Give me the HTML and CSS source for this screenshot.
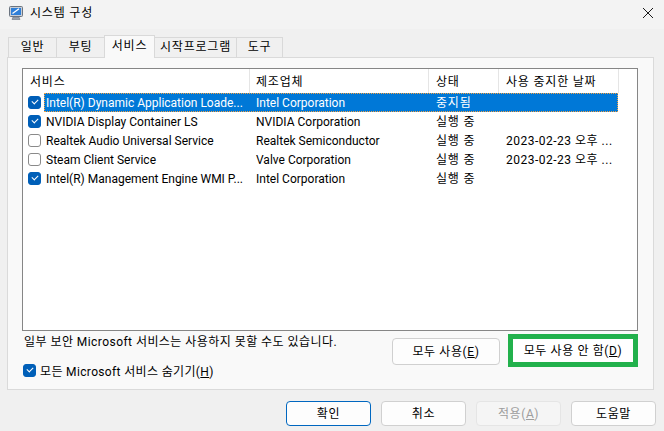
FILE: index.html
```html
<!DOCTYPE html>
<html lang="ko">
<head>
<meta charset="utf-8">
<title>시스템 구성</title>
<link rel="stylesheet" href="styles.css">
</head>
<body>
<div class="window">
  <div class="titlebar">
    <svg class="app-icon" width="16" height="16" viewBox="0 0 16 16">
      <rect x="1.5" y="1.5" width="13" height="10" rx="1" fill="#c9ced6" stroke="#6b7480"/>
      <rect x="3" y="3" width="10" height="7" fill="#2f7fd8"/>
      <path d="M4.5 8.5 L11 3.8" stroke="#ffffff" stroke-width="1.3"/>
      <path d="M5 12 L4 14.5 L12 14.5 L11 12 Z" fill="#9aa2ad" stroke="#6b7480" stroke-width="0.6"/>
    </svg>
    <span class="title">시스템 구성</span>
    <svg class="close" width="12" height="12" viewBox="0 0 12 12">
      <path d="M1 1 L11 11 M11 1 L1 11" stroke="#1a1a1a" stroke-width="1"/>
    </svg>
  </div>

  <div class="tabs">
    <div class="tab">일반</div>
    <div class="tab">부팅</div>
    <div class="tab active">서비스</div>
    <div class="tab">시작프로그램</div>
    <div class="tab">도구</div>
  </div>

  <div class="panel">
    <div class="list">
      <div class="list-head">
        <div class="hcell h1">서비스</div>
        <div class="hcell h2">제조업체</div>
        <div class="hcell h3">상태</div>
        <div class="hcell h4">사용 중지한 날짜</div>
      </div>
      <div class="row">
        <span class="cb on"></span>
        <div class="cells selected">
          <span class="c c1">Intel(R) Dynamic Application Loade...</span>
          <span class="c c2">Intel Corporation</span>
          <span class="c c3">중지됨</span>
          <span class="c c4"></span>
        </div>
      </div>
      <div class="row">
        <span class="cb on"></span>
        <div class="cells">
          <span class="c c1">NVIDIA Display Container LS</span>
          <span class="c c2">NVIDIA Corporation</span>
          <span class="c c3">실행 중</span>
          <span class="c c4"></span>
        </div>
      </div>
      <div class="row">
        <span class="cb"></span>
        <div class="cells">
          <span class="c c1">Realtek Audio Universal Service</span>
          <span class="c c2">Realtek Semiconductor</span>
          <span class="c c3">실행 중</span>
          <span class="c c4">2023-02-23 오후 ...</span>
        </div>
      </div>
      <div class="row">
        <span class="cb"></span>
        <div class="cells">
          <span class="c c1">Steam Client Service</span>
          <span class="c c2">Valve Corporation</span>
          <span class="c c3">실행 중</span>
          <span class="c c4">2023-02-23 오후 ...</span>
        </div>
      </div>
      <div class="row">
        <span class="cb on"></span>
        <div class="cells">
          <span class="c c1">Intel(R) Management Engine WMI P...</span>
          <span class="c c2">Intel Corporation</span>
          <span class="c c3">실행 중</span>
          <span class="c c4"></span>
        </div>
      </div>
    </div>

    <div class="bottom">
      <div class="left">
        <div class="note">일부 보안 Microsoft 서비스는 사용하지 못할 수도 있습니다.</div>
        <div class="hide"><span class="cb on"></span><span class="hide-label">모든 Microsoft 서비스 숨기기(<u>H</u>)</span></div>
      </div>
      <button class="btn enable-all">모두 사용(<u>E</u>)</button>
      <div class="highlight"><button class="btn disable-all">모두 사용 안 함(<u>D</u>)</button></div>
    </div>
  </div>

  <div class="footer">
    <button class="btn fbtn default">확인</button>
    <button class="btn fbtn">취소</button>
    <button class="btn fbtn disabled">적용(<u>A</u>)</button>
    <button class="btn fbtn">도움말</button>
  </div>
</div>
</body>
</html>
```

FILE: styles.css
```css
* { box-sizing: border-box; }
html, body { margin: 0; padding: 0; }
body {
  width: 664px;
  height: 431px;
  overflow: hidden;
  background: #f0f0f0;
  font-family: Roboto, "Noto Sans CJK KR", sans-serif;
  font-size: 12px;
  color: #000;
}
.window { width: 664px; height: 431px; display: flex; flex-direction: column; }

.titlebar {
  height: 29px;
  background: #f3f3f3;
  display: flex;
  align-items: center;
  padding-left: 8px;
  padding-bottom: 3px;
}
.app-icon { flex: none; }
.title { margin-left: 6px; font-size: 12px; line-height: 16px; letter-spacing: 0.8px; }
.close { margin-left: auto; margin-right: 10px; }

.tabs {
  display: flex;
  align-items: flex-end;
  padding-left: 8px;
  margin-top: 6px;
  height: 22px;
  position: relative;
  z-index: 1;
}
.tab {
  height: 20px;
  padding: 0 6px;
  border: 1px solid #d9d9d9;
  border-bottom: none;
  margin-right: -1px;
  background: #f0f0f0;
  line-height: 19px;
  text-align: center;
  letter-spacing: 0.8px;
  white-space: nowrap;
}
.tab:nth-child(1) { width: 49px; }
.tab:nth-child(2) { width: 49px; }
.tab.active {
  width: 51px;
  height: 23px;
  margin-bottom: -1px;
  background: #f9f9f9;
  line-height: 20px;
  padding: 0 2px;
  position: relative;
  z-index: 2;
}
.tab:nth-child(4) { width: 83px; padding: 0 2px; }
.tab:nth-child(5) { width: 47px; }

.panel {
  margin: 0 10px 0 7px;
  height: 333px;
  background: #f9f9f9;
  border: 1px solid #dadada;
  padding: 10px 15px 0 14px;
  display: flex;
  flex-direction: column;
}

.list {
  width: 616px;
  height: 263px;
  background: #fff;
  border: 1px solid #868686;
}
.list-head {
  display: flex;
  height: 24px;
}
.hcell {
  height: 24px;
  line-height: 22px;
  padding-top: 2px;
  padding-left: 7px;
  border-right: 1px solid #e5e5e5;
  letter-spacing: 0.8px;
  white-space: nowrap;
}
.h1 { width: 227px; }
.h2 { width: 179px; padding-left: 6px; }
.h3 { width: 70px; }
.h4 { width: 120px; padding-left: 7px; }

.row {
  display: flex;
  height: 19px;
  align-items: center;
}
.cb {
  width: 13px;
  height: 13px;
  border: 1px solid #8a8a8a;
  border-radius: 3px;
  background: #fff;
  flex: none;
  display: inline-block;
  position: relative;
}
.row .cb { margin-left: 5px; margin-right: 3px; }
.cb.on {
  background: #005fb8;
  border-color: #005fb8;
}
.cb.on::after {
  content: "";
  position: absolute;
  left: 3px;
  top: 2px;
  width: 5px;
  height: 3px;
  border-left: 1.2px solid #fff;
  border-bottom: 1.2px solid #fff;
  transform: rotate(-45deg);
}
.cells {
  display: flex;
  height: 19px;
  border: 1px solid transparent;
}
.cells.selected {
  background: #0078d7;
  color: #fff;
  border: 1px dotted #f5a142;
}
.c { white-space: nowrap; overflow: hidden; line-height: 15px; padding-top: 2px; }
.c1 { width: 205px; padding-left: 1px; }
.c2 { width: 179px; padding-left: 6px; }
.c3 { width: 70px; padding-left: 7px; letter-spacing: 0.8px; }
.c4 { width: 118px; padding-left: 7px; letter-spacing: 0.5px; }

.bottom {
  display: flex;
  align-items: flex-start;
  margin-top: 3px;
}
.left { flex: 1; display: flex; flex-direction: column; padding-left: 2px; }
.note { line-height: 16px; letter-spacing: 0.45px; white-space: nowrap; }
.hide {
  display: flex;
  align-items: center;
  margin-top: 12px;
  height: 16px;
  margin-left: -1px;
}
.hide .cb { margin-right: 4px; }
.hide-label { letter-spacing: 0.35px; }

.btn {
  font-family: inherit;
  font-size: 12px;
  color: #000;
  background: #fdfdfd;
  border: 1px solid #d0d0d0;
  border-radius: 4px;
  padding: 0;
  line-height: 16px;
  letter-spacing: 0.6px;
}
.enable-all {
  width: 108px;
  height: 27px;
  margin-top: 4px;
}
.highlight {
  width: 130px;
  height: 33px;
  margin-left: 8px;
  border: 5px solid #22b14c;
  background: #fff;
}
.disable-all {
  width: 120px;
  height: 23px;
  border: none;
  background: #fff;
  border-radius: 0;
}

.footer {
  display: flex;
  justify-content: flex-end;
  gap: 10px;
  padding: 11px 8px 0 0;
}
.fbtn { width: 85px; height: 25px; }
.fbtn.default { border: 1px solid #0067c0; }
.fbtn.disabled { background: #f5f5f5; color: #9d9d9d; border-color: #e5e5e5; }
```
